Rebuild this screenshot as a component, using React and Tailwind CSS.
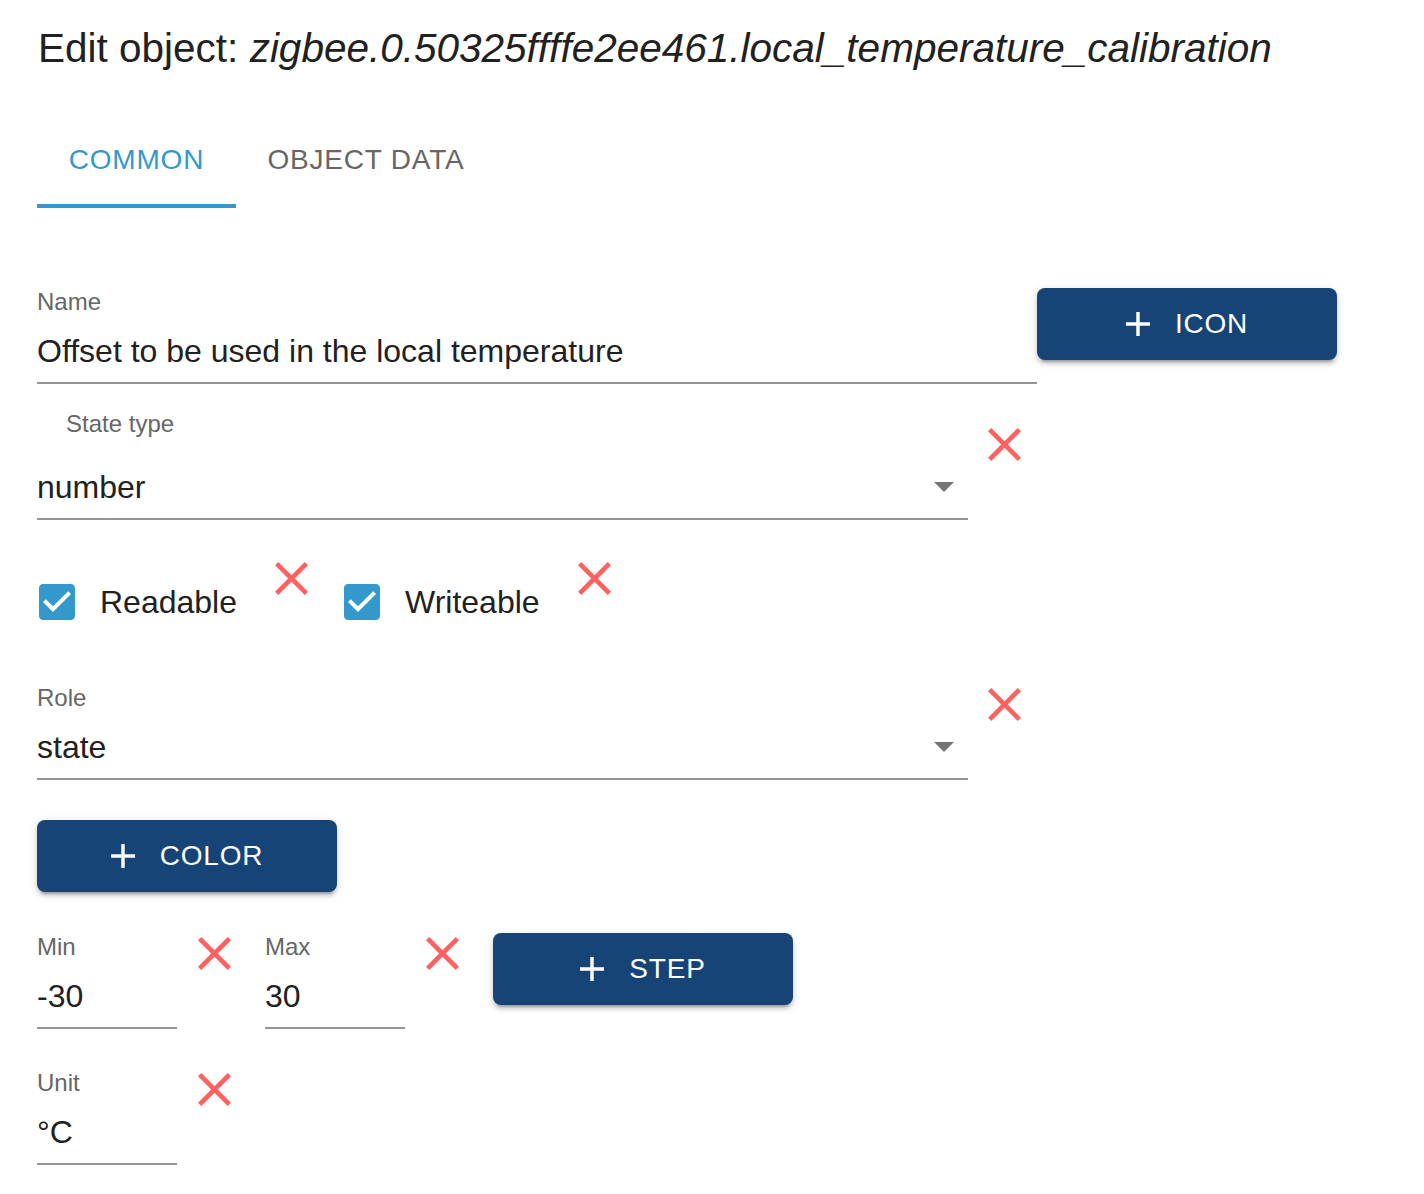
import React from 'react';

const CloseX = ({ className }) => (
    <svg viewBox="5 5 14 14" width="33" height="33" className={className}>
        <path
            fill="#ff6060"
            d="M19 6.41 17.59 5 12 10.59 6.41 5 5 6.41 10.59 12 5 17.59 6.41 19 12 13.41 17.59 19 19 17.59 13.41 12z"
        />
    </svg>
);

const DropArrow = () => (
    <svg viewBox="7 10 10 5" width="20" height="10" className="mr-[14px] shrink-0">
        <path fill="#757575" d="M7 10l5 5 5-5z" />
    </svg>
);

const CheckIcon = () => (
    <svg viewBox="3 3 18 18" width="36" height="36" className="shrink-0">
        <path
            fill="#3399cc"
            d="M19 3H5c-1.11 0-2 .9-2 2v14c0 1.1.89 2 2 2h14c1.11 0 2-.9 2-2V5c0-1.1-.89-2-2-2zm-9 14l-5-5 1.41-1.41L10 14.17l7.59-7.59L19 8l-9 9z"
        />
    </svg>
);

const AddButton = ({ label, className }) => (
    <button
        className={`flex h-[72px] w-[300px] shrink-0 items-center justify-center gap-[25px] rounded-[8px] bg-[#174477] text-white shadow-[0_6px_2px_-4px_rgba(0,0,0,0.2),0_4px_4px_0_rgba(0,0,0,0.14),0_2px_10px_0_rgba(0,0,0,0.12)] ${className || ''}`}
    >
        <svg viewBox="5 5 14 14" width="24" height="24">
            <path fill="#ffffff" d="M19 13h-6v6h-2v-6H5v-2h6V5h2v6h6v2z" />
        </svg>
        <span className="text-[28px] leading-[32px] tracking-[0.8px]">{label}</span>
    </button>
);

// plain text field, label on top and a grey underline
const Field = ({ label, value, width, select }) => (
    <div className={`shrink-0 ${width}`}>
        <div className="text-[24px] leading-[28px] text-[#666666]">{label}</div>
        <div className="mt-[16px] flex items-center justify-between border-b-2 border-[#949494] pb-[12px]">
            <span className="text-[32px] leading-[38px] text-[#212121]">{value}</span>
            {select && <DropArrow />}
        </div>
    </div>
);

const Checkbox = ({ label }) => (
    <div className="flex h-[84px] items-center">
        <div className="ml-[2px]">
            <CheckIcon />
        </div>
        <span className="ml-[25px] text-[32px] leading-[38px] text-[#212121]">{label}</span>
    </div>
);

export default function App() {
    return (
        <div className="min-h-screen bg-white pl-[37px] pt-[24px] font-['Liberation_Sans',Arial,sans-serif]">
            <h1 className="pl-[1px] text-[40.5px] leading-[48px] text-[#212121]">
                Edit object: <i>zigbee.0.50325ffffe2ee461.local_temperature_calibration</i>
            </h1>

            <div className="mt-[40px] flex h-[96px]">
                <div className="flex w-[199px] items-center justify-center border-b-4 border-[#3399cc] pt-[4px] text-[28px] leading-[32px] tracking-[0.8px] text-[#3399cc]">
                    COMMON
                </div>
                <div className="flex w-[260px] items-center justify-center text-[28px] leading-[32px] tracking-[0.8px] text-[#666666]">
                    OBJECT DATA
                </div>
            </div>

            <div className="mt-[80px] flex items-start">
                <Field label="Name" value="Offset to be used in the local temperature" width="w-[1000px]" />
                <AddButton label="ICON" />
            </div>

            <div className="mt-[26px] flex items-start">
                <div className="w-[931px] shrink-0">
                    <div className="pl-[29px] text-[24px] leading-[28px] text-[#666666]">State type</div>
                    <div className="mt-[30px] flex items-center justify-between border-b-2 border-[#949494] pb-[12px]">
                        <span className="text-[32px] leading-[38px] text-[#212121]">number</span>
                        <DropArrow />
                    </div>
                </div>
                <CloseX className="ml-[20px] mt-[18px]" />
            </div>

            <div className="mt-[40px] flex items-start">
                <Checkbox label="Readable" />
                <CloseX className="ml-[38px] mt-[2px]" />
                <div className="ml-[34px]">
                    <Checkbox label="Writeable" />
                </div>
                <CloseX className="ml-[38px] mt-[2px]" />
            </div>

            <div className="mt-[40px] flex items-start">
                <Field label="Role" value="state" width="w-[931px]" select />
                <CloseX className="ml-[20px] mt-[4px]" />
            </div>

            <AddButton label="COLOR" className="mt-[40px]" />

            <div className="mt-[41px] flex items-start">
                <Field label="Min" value="-30" width="w-[140px]" />
                <CloseX className="ml-[21px] mt-[4px]" />
                <div className="ml-[34px]">
                    <Field label="Max" value="30" width="w-[140px]" />
                </div>
                <CloseX className="ml-[21px] mt-[4px]" />
                <AddButton label="STEP" className="ml-[34px]" />
            </div>

            <div className="mt-[40px] flex items-start pb-[30px]">
                <Field label="Unit" value="°C" width="w-[140px]" />
                <CloseX className="ml-[21px] mt-[4px]" />
            </div>
        </div>
    );
}
